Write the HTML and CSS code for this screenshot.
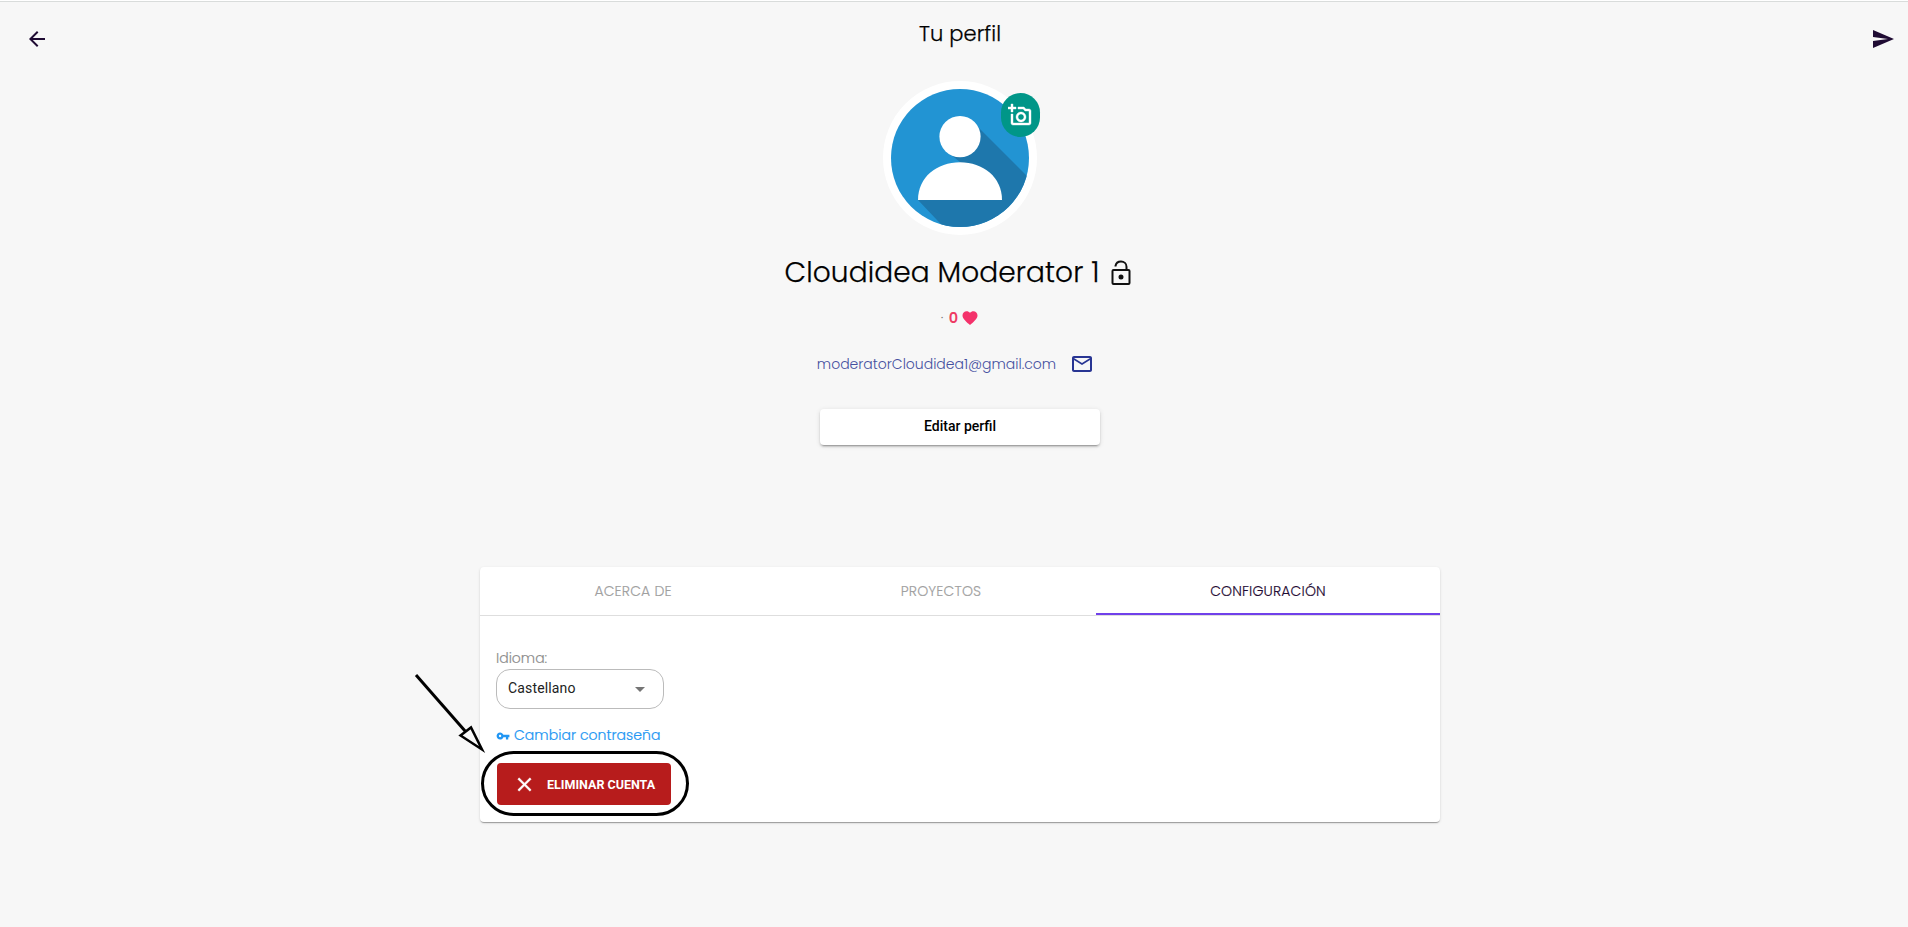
FILE: index.html
```html
<!DOCTYPE html>
<html lang="es">
<head>
<meta charset="utf-8">
<title>Tu perfil</title>
<link rel="stylesheet" href="styles.css">
</head>
<body>
<header class="topbar">
  <svg class="icon" viewBox="0 0 24 24"><path d="M20 11H7.830l5.590-5.590L12 4l-8 8 8 8 1.410-1.410L7.830 13H20z"/></svg>
  <h1 class="title">Tu perfil</h1>
  <svg class="icon" viewBox="0 0 24 24"><path d="M2.010 21L23 12 2.010 3 2 10l15 2-15 2z"/></svg>
</header>
<main class="page">
  <section class="profile">
    <div class="avatar">
      <svg class="portrait" viewBox="0 0 138 138">
        <defs><clipPath id="disc"><circle cx="69" cy="69" r="69"/></clipPath></defs>
        <g clip-path="url(#disc)">
          <rect width="138" height="138" fill="#2294d3"/>
          <path d="M84 35L150 101V150H64L27 111L69 73L54 61Z" fill="#1e77ac"/>
          <circle cx="69" cy="47.600" r="20.600" fill="#fff"/>
          <path d="M27 111C27 88 46 73.200 69 73.200S111 88 111 111Z" fill="#fff"/>
        </g>
      </svg>
      <button class="badge" aria-label="Cambiar foto">
        <svg class="badge-icon" viewBox="0 0 24 24"><path d="M21 6h-3.170L16 4h-6v2h5.120l1.830 2H21v12H5v-9H3v9c0 1.100.9 2 2 2h16c1.100 0 2-.9 2-2V8c0-1.100-.9-2-2-2zM8 14c0 2.760 2.240 5 5 5s5-2.240 5-5-2.240-5-5-5-5 2.240-5 5zm5-3c1.650 0 3 1.350 3 3s-1.350 3-3 3-3-1.350-3-3 1.350-3 3-3zM5 6h3V4H5V1H3v3H0v2h3v3h2z"/></svg>
      </button>
    </div>
    <div class="name-row">
      <h2 class="name">Cloudidea Moderator 1</h2>
      <svg class="lock" viewBox="0 0 28 28"><rect x="5.500" y="11" width="17" height="14" rx="1"/><path d="M8.500 7.500V7C9 4 11.300 2.500 14 2.500C17 2.500 19.500 4.700 19.500 7.700V11"/><circle cx="14" cy="18" r="1.500"/></svg>
    </div>
    <div class="likes">
      <span class="dot">·</span>
      <span class="count">0</span>
      <svg class="heart" viewBox="0 0 24 24"><path d="M12 21.350l-1.450-1.320C5.400 15.360 2 12.280 2 8.500 2 5.420 4.420 3 7.500 3c1.740 0 3.410.81 4.500 2.090C13.090 3.810 14.760 3 16.500 3 19.580 3 22 5.420 22 8.500c0 3.780-3.400 6.860-8.550 11.540z"/></svg>
    </div>
    <div class="mail-row">
      <span class="email">moderatorCloudidea1@gmail.com</span>
      <svg class="mail" viewBox="0 0 24 24"><path d="M22 6c0-1.100-.9-2-2-2H4c-1.100 0-2 .9-2 2v12c0 1.100.9 2 2 2h16c1.100 0 2-.9 2-2V6zm-2 0l-8 5-8-5h16zm0 12H4V8l8 5 8-5v10z"/></svg>
    </div>
    <button class="edit">Editar perfil</button>
  </section>
  <section class="card">
    <nav class="tabs">
      <a class="tab">ACERCA DE</a>
      <a class="tab">PROYECTOS</a>
      <a class="tab active">CONFIGURACIÓN</a>
    </nav>
    <div class="settings">
      <span class="label">Idioma:</span>
      <div class="select"><span>Castellano</span><i class="caret"></i></div>
      <a class="password">
        <svg class="key" viewBox="0 0 24 24"><path d="M12.650 10C11.830 7.670 9.610 6 7 6c-3.310 0-6 2.690-6 6s2.690 6 6 6c2.610 0 4.830-1.670 5.650-4H17v4h4v-4h2v-4H12.650zM7 14c-1.100 0-2-.9-2-2s.9-2 2-2 2 .9 2 2-.9 2-2 2z"/></svg>
        <span class="password-text">Cambiar contraseña</span>
      </a>
      <button class="delete">
        <svg class="close" viewBox="0 0 24 24"><path d="M19 6.410L17.590 5 12 10.590 6.410 5 5 6.410 10.590 12 5 17.590 6.410 19 12 13.410 17.590 19 19 17.590 13.410 12z"/></svg>
        <span>ELIMINAR CUENTA</span>
      </button>
    </div>
    <svg class="callout" viewBox="410 665 290 155">
      <rect x="482.500" y="751.500" width="205" height="62" rx="31"/>
      <path d="M416 674L465.500 730.500"/>
      <path class="head" d="M460.500 734.500L471 726.500L482 748.500Z"/>
    </svg>
  </section>
</main>
</body>
</html>
```
FILE: styles.css
```css
* { box-sizing: border-box; }
body {
  margin: 0;
  height: 927px;
  overflow: hidden;
  background: #f7f7f7;
  border-top: 1px solid #fff;
  color: #000;
  font-family: Poppins, Inter, sans-serif;
  font-weight: 300;
  font-feature-settings: "cv11";
}
svg { display: block; flex: none; }
button { border: 0; margin: 0; padding: 0; }
h1, h2 { margin: 0; font-weight: inherit; }
.topbar {
  display: flex;
  justify-content: space-between;
  height: 80px;
  padding: 25px 13px 0 25px;
  border-top: 1px solid #d9dcdb;
}
.icon { width: 24px; height: 24px; fill: #1f0b33; }
.title {
  font-size: 21px;
  line-height: 26px;
  margin-top: -6px;
  letter-spacing: .1px;
  -webkit-text-stroke: .25px #000;
}
.page { display: flex; flex-direction: column; align-items: center; padding-left: 12px; }
.profile { display: flex; flex-direction: column; align-items: center; }
.avatar {
  position: relative;
  width: 154px;
  height: 154px;
  border: 8px solid #fff;
  border-radius: 50%;
  background: #fff;
}
.portrait { width: 138px; height: 138px; }
.badge {
  position: absolute;
  left: 110px;
  top: 4px;
  width: 39px;
  height: 44px;
  border-radius: 20px;
  background: #009688;
  display: flex;
  align-items: center;
  justify-content: center;
}
.badge-icon { width: 24px; height: 24px; margin: 0 1px 1px 0; fill: #fff; stroke: #fff; stroke-width: .4; }
.name-row { display: flex; align-items: center; gap: 8px; margin-top: 21px; height: 34px; }
.name { font-size: 28px; line-height: 34px; letter-spacing: .1px; margin-top: -1px; white-space: nowrap; -webkit-text-stroke: .25px #000; }
.lock { width: 28px; height: 28px; fill: none; stroke: #111; stroke-width: 2; }
.lock circle { fill: #111; }
.likes { display: flex; align-items: center; height: 20px; margin-top: 18px; color: #e91e63; }
.dot { width: 8px; font-size: 14px; color: #777; line-height: 18px; }
.count { font-size: 14.5px; font-weight: 600; line-height: 18px; margin: 0 3px 0 0; color: #ee3a64; }
.heart { width: 18px; height: 18px; fill: #f4326b; }
.mail-row { display: flex; align-items: center; height: 24px; gap: 14px; margin: 24px 9px 0 0; }
.email { font-size: 14px; line-height: 20px; color: #4550a0; margin-top: -1px; }
.mail { width: 24px; height: 24px; fill: #283593; }
.edit {
  width: 280px;
  height: 36px;
  margin-top: 33px;
  padding-bottom: 2px;
  border-radius: 4px;
  background: #fff;
  color: #000;
  font: 500 14px/34px Roboto, sans-serif;
  box-shadow: 0 3px 1px -2px rgba(0,0,0,.2), 0 2px 2px rgba(0,0,0,.14), 0 1px 5px rgba(0,0,0,.12);
}
.card {
  position: relative;
  width: 960px;
  height: 255px;
  margin-top: 122px;
  border-radius: 4px;
  background: #fff;
  box-shadow: 0 2px 1px -1px rgba(0,0,0,.2), 0 1px 1px rgba(0,0,0,.14), 0 1px 3px rgba(0,0,0,.12);
}
.tabs { display: grid; grid-template-columns: 306px 310px 344px; height: 49px; border-bottom: 1px solid #dedede; }
.tab {
  display: flex;
  align-items: center;
  justify-content: center;
  height: 48px;
  font-size: 14px;
  letter-spacing: .15px;
  color: #a0a0a0;
  -webkit-text-stroke: .15px;
}
.active { color: #1f0b33; border-bottom: 2px solid #7040ea; padding-top: 2px; }
.settings { display: flex; flex-direction: column; align-items: flex-start; padding: 32px 16px 0; }
.label { font-size: 14px; line-height: 20px; margin-bottom: 1px; color: #8c8c8c; -webkit-text-stroke: .15px; }
.select {
  display: flex;
  align-items: center;
  justify-content: space-between;
  width: 168px;
  height: 40px;
  padding: 0 18px 2px 11px;
  border: 1px solid #bbb;
  border-radius: 14px;
  color: #222;
  font: 400 14px/20px Roboto, sans-serif;
  letter-spacing: .15px;
}
.caret { border: 5px solid transparent; border-top-color: #757575; border-bottom: 0; margin-top: 3px; }
.password { display: flex; align-items: center; height: 20px; gap: 4px; margin-top: 16px; color: #2196f3; }
.key { width: 14px; height: 14px; fill: #2196f3; margin-top: 2px; }
.password-text { font-size: 14px; letter-spacing: .04px; white-space: nowrap; -webkit-text-stroke: .2px #2196f3; }
.delete {
  display: flex;
  align-items: center;
  width: 174px;
  height: 42px;
  margin: 18px 0 0 1px;
  padding-left: 16px;
  gap: 11px;
  border-radius: 4px;
  background: #b71c1c;
  color: #fff;
  font: 700 12.5px/20px Roboto, sans-serif;
}
.delete span { padding-top: 1px; white-space: nowrap; }
.close { width: 23px; height: 23px; fill: #fff; stroke: #fff; stroke-width: .5; }
.callout { position: absolute; left: -70px; top: 99px; width: 290px; height: 155px; fill: none; stroke: #000; stroke-width: 3; }
.head { fill: #f7f7f7; stroke-width: 2.5; }
```
